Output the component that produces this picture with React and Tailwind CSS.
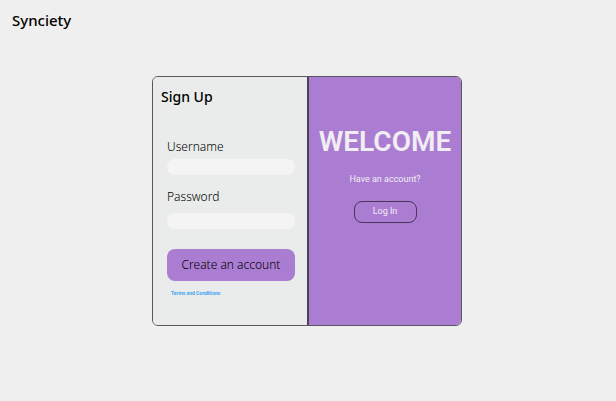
import React from "react";

function Field({ id, label, type, gap }) {
  return (
    <div className={`flex flex-col ${gap}`}>
      <label htmlFor={id} className="text-xs leading-4 font-light text-black">
        {label}
      </label>
      <input
        id={id}
        type={type}
        className="h-4 w-full rounded-full bg-[#f4f4f4] px-2 text-xs text-black outline-none"
      />
    </div>
  );
}

function SignUpPanel() {
  return (
    <section className="min-w-0 border-r-2 border-[#4a4152] bg-[#e9ecea] pt-3 pr-3 pb-7 pl-2">
      <h2 className="text-sm leading-4 font-medium text-black">Sign Up</h2>
      <form className="mt-[34px] ml-[6px] flex flex-col" onSubmit={(e) => e.preventDefault()}>
        <Field id="username" label="Username" type="text" gap="gap-1" />
        <div className="mt-[14px]">
          <Field id="password" label="Password" type="password" gap="gap-2" />
        </div>
        <button
          type="submit"
          className="mt-5 h-8 w-full rounded-lg bg-[#ab7dd2] text-xs font-light text-black"
        >
          Create an account
        </button>
        <a
          href="#terms"
          className="mt-2 ml-1 self-start font-['Roboto',sans-serif] text-[5px] leading-2 font-bold text-[#46a4f5]"
        >
          Terms and Conditions
        </a>
      </form>
    </section>
  );
}

function WelcomePanel() {
  return (
    <section className="flex min-w-0 flex-col items-center bg-[#ab7dd2] pt-12 font-['Roboto',sans-serif] text-[#f0eef2]">
      <h1 className="text-[28px] leading-[34px] font-semibold">WELCOME</h1>
      <p className="mt-[14px] text-[9px] leading-3">Have an account?</p>
      <button
        type="button"
        className="mt-4 h-[22px] w-[63px] rounded-lg border border-[#4a3559] text-[9px]"
      >
        Log In
      </button>
    </section>
  );
}

export default function App() {
  return (
    <div className="min-h-screen bg-[#efefef] font-['Noto_Sans',sans-serif]">
      <header className="px-3 pt-3">
        <a href="#home" className="block w-fit text-[15px] leading-4 font-medium text-black">
          Synciety
        </a>
      </header>
      <main className="flex justify-center pt-12 pr-[18px] pb-8 pl-4">
        <div className="grid w-full max-w-[310px] grid-cols-[156fr_152fr] overflow-hidden rounded-md border border-[#5a5560]">
          <SignUpPanel />
          <WelcomePanel />
        </div>
      </main>
    </div>
  );
}
